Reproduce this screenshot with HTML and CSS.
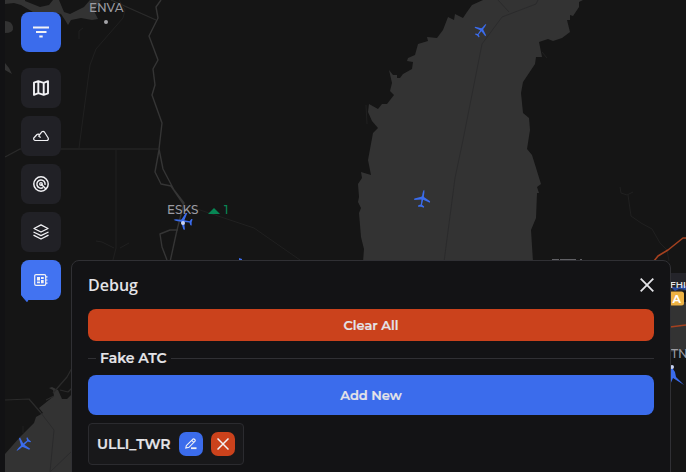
FILE: index.html
```html
<!DOCTYPE html>
<html lang="en">
<head>
<meta charset="utf-8">
<title>Debug</title>
<link rel="stylesheet" href="styles.css">
</head>
<body>
<main class="app">
  <svg class="map" viewBox="0 0 686 472" width="686" height="472">
    <defs>
      <path id="plane" d="M0-9Q1-8 .9-2.500L1.500-1.500 8 1.500V3L.9 1.200 .6 6.300 3 7.500V8.800L0 8.300-3 8.800V7.500L-.6 6.300-.9 1.200-8 3V1.500L-1.500-1.500-.9-2.500Q-1-8 0-9Z"/>
    </defs>
    <g class="water">
      <path d="M483 0 472 5 467 12 463 18 455 14 454 20 448 17 443 30 437 38 427 37 428 41 418 44 415 55 408 58 407 61 413 62 412 69 403 74 400 78 397 78 397 75 393 75 389 70 392 83 390 91 394 95 387 104 382 104 378 109 369 104 368 112 372 121 378 128 373 133 368 160 371 175 361 172 362 178 358 184 359 197 358 202 361 208 359 213 361 237 364 249 363 262H533L531 230 536 218 537 193 539 193 537 187 541 184 532 155 527 149 530 130 529 118 523 113 521 93 523 82 535 64 536 57 542 57 539 42 548 39 553 41 562 38 570 32 567 20 570 20 570 15 573 16 579 7 579 2 583 0Z"/>
      <path d="M5 0V4L14 3 21 5 33 12H52L61 14 65 20 68 25 71 20 81 18 92 20 98 19 94 11 101 0H90L84 7 70 14 64 12 59 0H53L49 5 40 7 25 1V0Z"/>
      <path d="M5 21Q12 21 13 27T5 33ZM5 63 9 68 12 74 5 70Z"/>
      <path d="M5 454 20 437 34 423 36 417 43 413 39 408 54 396 53 390 49 388 52 387 58 390 62 399 67 399 72 394V472H5Z"/>
      <path d="M670 302H686V350L670 352Z"/>
    </g>
    <g class="roads">
      <path class="road-main" d="M161 0 156 7 158 18 149 36 158 60 153 69 155 85 152 95 162 123 159 149 163 169 174 190 184 203 177 230 170 262M184 205 171 186 161 184 155 172 159 150M178 230 170 230 160 234 162 247 167 260"/>
      <path class="road-mid" d="M5 157 20 149H159M111 0 156 20M5 400 29 399 41 413M53 393 67 377 72 368M46 400 54 396M60 390 68 392 72 388"/>
      <path d="M119 0 125 10 123 18 96 49 90 65 79 148M116 149V248L113 260M96 241 102 242 114 248M120 248 129 243M83 28 79 31 79 39M185 205 254 228 300 260M620 187 621 193 627 195 633 192M628 195 631 216 641 223 652 229 660 243 667 250 669 261M23 426V433M366 105 367 124M542 52 547 58"/>
      <path class="road-sea" d="M538 0 536 4 502 17 482 44 463 140 455 178 444 262M498 0 509 12M41 413 54 430 50 472 72 451"/>
      <path class="border" d="M654 261 658 256 668 250 683 238H686M670 327 686 325"/>
    </g>
    <g class="planes">
      <use href="#plane" transform="translate(481.500 30) rotate(38) scale(.85)"/>
      <use href="#plane" transform="translate(422.500 198.500) rotate(10)"/>
      <use href="#plane" transform="translate(183 221) rotate(278) scale(1.05)"/>
      <use href="#plane" transform="translate(23 445) rotate(228) scale(.95)"/>
      <path d="M671 366 675 372 676 377 684 385 673 378 670 385Z"/>
      <path d="M239 261V258L242 259V261ZM25 299H29L27 302Z"/>
    </g>
    <circle class="dot" cx="106" cy="22" r="2"/>
    <circle class="dot light" cx="183" cy="223" r="2"/>
    <circle class="dot light" cx="672" cy="367" r="2"/>
    <path class="arrival" d="M208 214 214 208 220 214Z"/>
    <g class="airports">
      <text x="89" y="12" textLength="34.500" lengthAdjust="spacingAndGlyphs">ENVA</text>
      <text x="167" y="214" textLength="31.500" lengthAdjust="spacingAndGlyphs">ESKS</text>
      <text x="671" y="358">TN</text>
      <path class="cut-label" d="M552 259.500H559M560 259.500H576M580 259.500H582"/>
      <text class="count" x="224" y="214">1</text>
    </g>
    <path class="tag" d="M670 273H686V291H670Z"/>
    <path class="tag-plane" d="M670 286 677 288 683 285 686 286V290L679 289 675 291Z"/>
    <text class="tag-text" x="670" y="287.500">FHI</text>
    <rect class="tag-badge" x="669" y="291.500" width="15" height="14" rx="2.500"/>
    <text class="badge-text" x="672.500" y="303">A</text>
    <path class="edge" d="M0 0H5V472H0Z"/>
    <path class="tail" d="M21 291V295L25 300 27 302 29 299Z"/>
  </svg>

  <nav class="tools">
    <button class="tool active filter" aria-label="Filter"><svg viewBox="0 0 16 16"><path stroke-width="1.800" d="M0 3.500H16M3 8H13.500M6.300 12.500H9.700"/></svg></button>
    <button class="tool" aria-label="Map"><svg viewBox="0 0 16 16"><path stroke-width="1.900" d="M1 2.700 5.300 1.200 10.700 2.800 15 1.200V13.300L10.700 14.800 5.300 13.200 1 14.800ZM5.300 1.200V13.200M10.700 2.800V14.800"/></svg></button>
    <button class="tool" aria-label="Terrain"><svg viewBox="0 0 16 16"><path stroke-width="1.200" d="M2.500 12.500Q.2 12.200.8 10L4 6.500Q5.300 5.500 6.300 7L9 3.700Q10.300 2.800 11.400 4L15.200 10Q15.800 12.400 13.500 12.500ZM6.300 7 5.800 8.200 7.700 9.500"/></svg></button>
    <button class="tool" aria-label="Radar"><svg viewBox="0 0 16 16"><circle cx="8" cy="8" r="7.200" stroke-width="1.500"/><path stroke-width="1.500" d="M10 11.600A4.100 4.100 0 1 1 12 8.800M8 8 13 13"/><circle cx="8" cy="8" r="1.300" stroke-width="1.300"/></svg></button>
    <button class="tool" aria-label="Layers"><svg viewBox="0 0 16 16"><path stroke-width="1.300" d="M8 .9 15 4.500 8 8 1 4.500ZM.5 8 8 11.700 15.500 8M.5 11.200 8 15 15.500 11.200"/></svg></button>
    <button class="tool active" aria-label="Debug"><svg viewBox="0 0 16 16"><rect x="1.700" y="2.600" width="11" height="10.800" rx="1.300" stroke-width="1.200"/><path class="solid" d="M4 5H7V8.500H4ZM8 5H10.700V7H8ZM8 8H10.700V11.300H8ZM4 9.400H7V11.300H4Z"/><path stroke-width="1.200" d="M13 4.800H14.500M13 8H14.500M13 11.200H14.500"/></svg></button>
  </nav>

  <section class="panel">
    <header class="panel-head">
      <h1 class="title">Debug</h1>
      <button class="close" aria-label="Close"><svg viewBox="0 0 14 14"><path d="M.7.7 13.300 13.300M13.300.7.7 13.300"/></svg></button>
    </header>
    <button class="action danger"><span>Clear All</span></button>
    <div class="divider"><span class="divider-text">Fake ATC</span></div>
    <button class="action primary"><span>Add New</span></button>
    <div class="station">
      <span class="station-name">ULLI_TWR</span>
      <button class="small primary" aria-label="Edit"><svg viewBox="0 0 12 12"><path d="M1.300 7.700 7.700 1.300Q8.700.5 9.700 1.500T9.800 3.400L4 9.300.8 10ZM6.700 2.300 8.800 4.400"/><path stroke-width="1.800" d="M6 10.200H11.500"/></svg></button>
      <button class="small danger" aria-label="Delete"><svg viewBox="0 0 12 12"><path stroke-width="1.500" d="M.5.500 11.500 11.500M11.500.500.500 11.500"/></svg></button>
    </div>
  </section>
</main>
</body>
</html>
```
FILE: styles.css
```css
* { box-sizing: border-box; }
body { margin: 0; background: #151515; }
button { border: 0; padding: 0; font: inherit; color: inherit; }
svg { display: block; }

.app {
  position: relative;
  width: 686px;
  height: 472px;
  overflow: hidden;
  color: #e4e4e8;
  font-family: Montserrat, "Open Sans", sans-serif;
}

.map { position: absolute; inset: 0; }
.water { fill: #333; }
.roads { fill: none; stroke: #202020; stroke-width: 1; stroke-linejoin: round; }
.road-main { stroke: #353535; stroke-width: 1.4; }
.road-mid { stroke: #2b2b2b; stroke-width: 1.2; }
.road-sea { stroke: #2b2b2c; }
.border { stroke: #a5411f; stroke-width: 1.6; }
.planes { fill: #3b6cec; }
.dot { fill: #a4a4a8; }
.light { fill: #c9d2f0; }
.arrival { fill: #078654; }
.airports { fill: #9b9ba2; font: 500 12px Montserrat, "Open Sans", sans-serif; }
.airports .count { fill: #078654; }
.cut-label { stroke: #606064; stroke-width: 1; }
.tag { fill: #24242a; }
.tag-plane { fill: #294b9e; }
.tag-text { fill: #e4e4e8; font: 600 9px Montserrat, "Open Sans", sans-serif; }
.tag-badge { fill: #edb244; }
.badge-text { fill: #fff; font: 700 11px Montserrat, "Open Sans", sans-serif; }
.edge { fill: #121214; }
.tail { fill: #3b6cec; }

.tools {
  position: relative;
  display: flex;
  flex-direction: column;
  gap: 8px;
  width: 40px;
  margin-left: 21px;
  padding-top: 12px;
}
.tool {
  display: grid;
  place-items: center;
  width: 40px;
  height: 40px;
  border-radius: 8px;
  background: #212126;
}
.tool svg { width: 16px; height: 16px; fill: none; stroke: #f2f2f5; stroke-linejoin: round; }
.tool .solid { fill: #f2f2f5; stroke: none; }
.active { background: #4273f1; }
.filter { margin-bottom: 8px; background: #3b6cec; }

.panel {
  position: absolute;
  left: 71px;
  top: 260px;
  display: flex;
  flex-direction: column;
  align-items: stretch;
  width: 600px;
  height: 230px;
  padding: 0 16px;
  border: 1px solid #303034;
  border-radius: 8px 8px 0 0;
  background: #131315;
}
.panel-head { display: flex; align-items: center; justify-content: space-between; height: 48px; }
.title { margin: 0; font: 600 16px/24px "Open Sans", sans-serif; }
.close { width: 14px; height: 14px; background: none; }
.close svg { width: 14px; height: 14px; stroke: #e4e4e8; stroke-width: 1.8; }
.action { display: grid; place-items: center; flex: none; border-radius: 8px; font-size: 13px; font-weight: 600; line-height: 20px; -webkit-text-stroke: .2px; }
.danger { background: #cb421c; }
.primary { background: #3b6cec; }
.action.danger { height: 32px; }
.action.primary { height: 40px; }
.divider { display: flex; align-items: center; gap: 4px; height: 34px; font-size: 14px; font-weight: 600; line-height: 20px; }
.divider::before, .divider::after { content: ""; height: 1px; background: #303034; }
.divider::before { width: 8px; }
.divider::after { flex: 1; }
.divider-text { width: 67px; white-space: nowrap; -webkit-text-stroke: .2px; }
.station {
  display: flex;
  align-items: center;
  gap: 8px;
  width: 156px;
  height: 42px;
  margin-top: 8px;
  padding-left: 8px;
  border: 1px solid #2b2b2f;
  border-radius: 4px;
  background: #18181a;
}
.station-name { width: 74px; font-size: 14px; font-weight: 600; white-space: nowrap; -webkit-text-stroke: .2px; }
.small { display: grid; place-items: center; flex: none; width: 24px; height: 24px; border-radius: 7px; }
.small svg { width: 12px; height: 12px; fill: none; stroke: #f2f2f5; stroke-width: 1.1; }
```
